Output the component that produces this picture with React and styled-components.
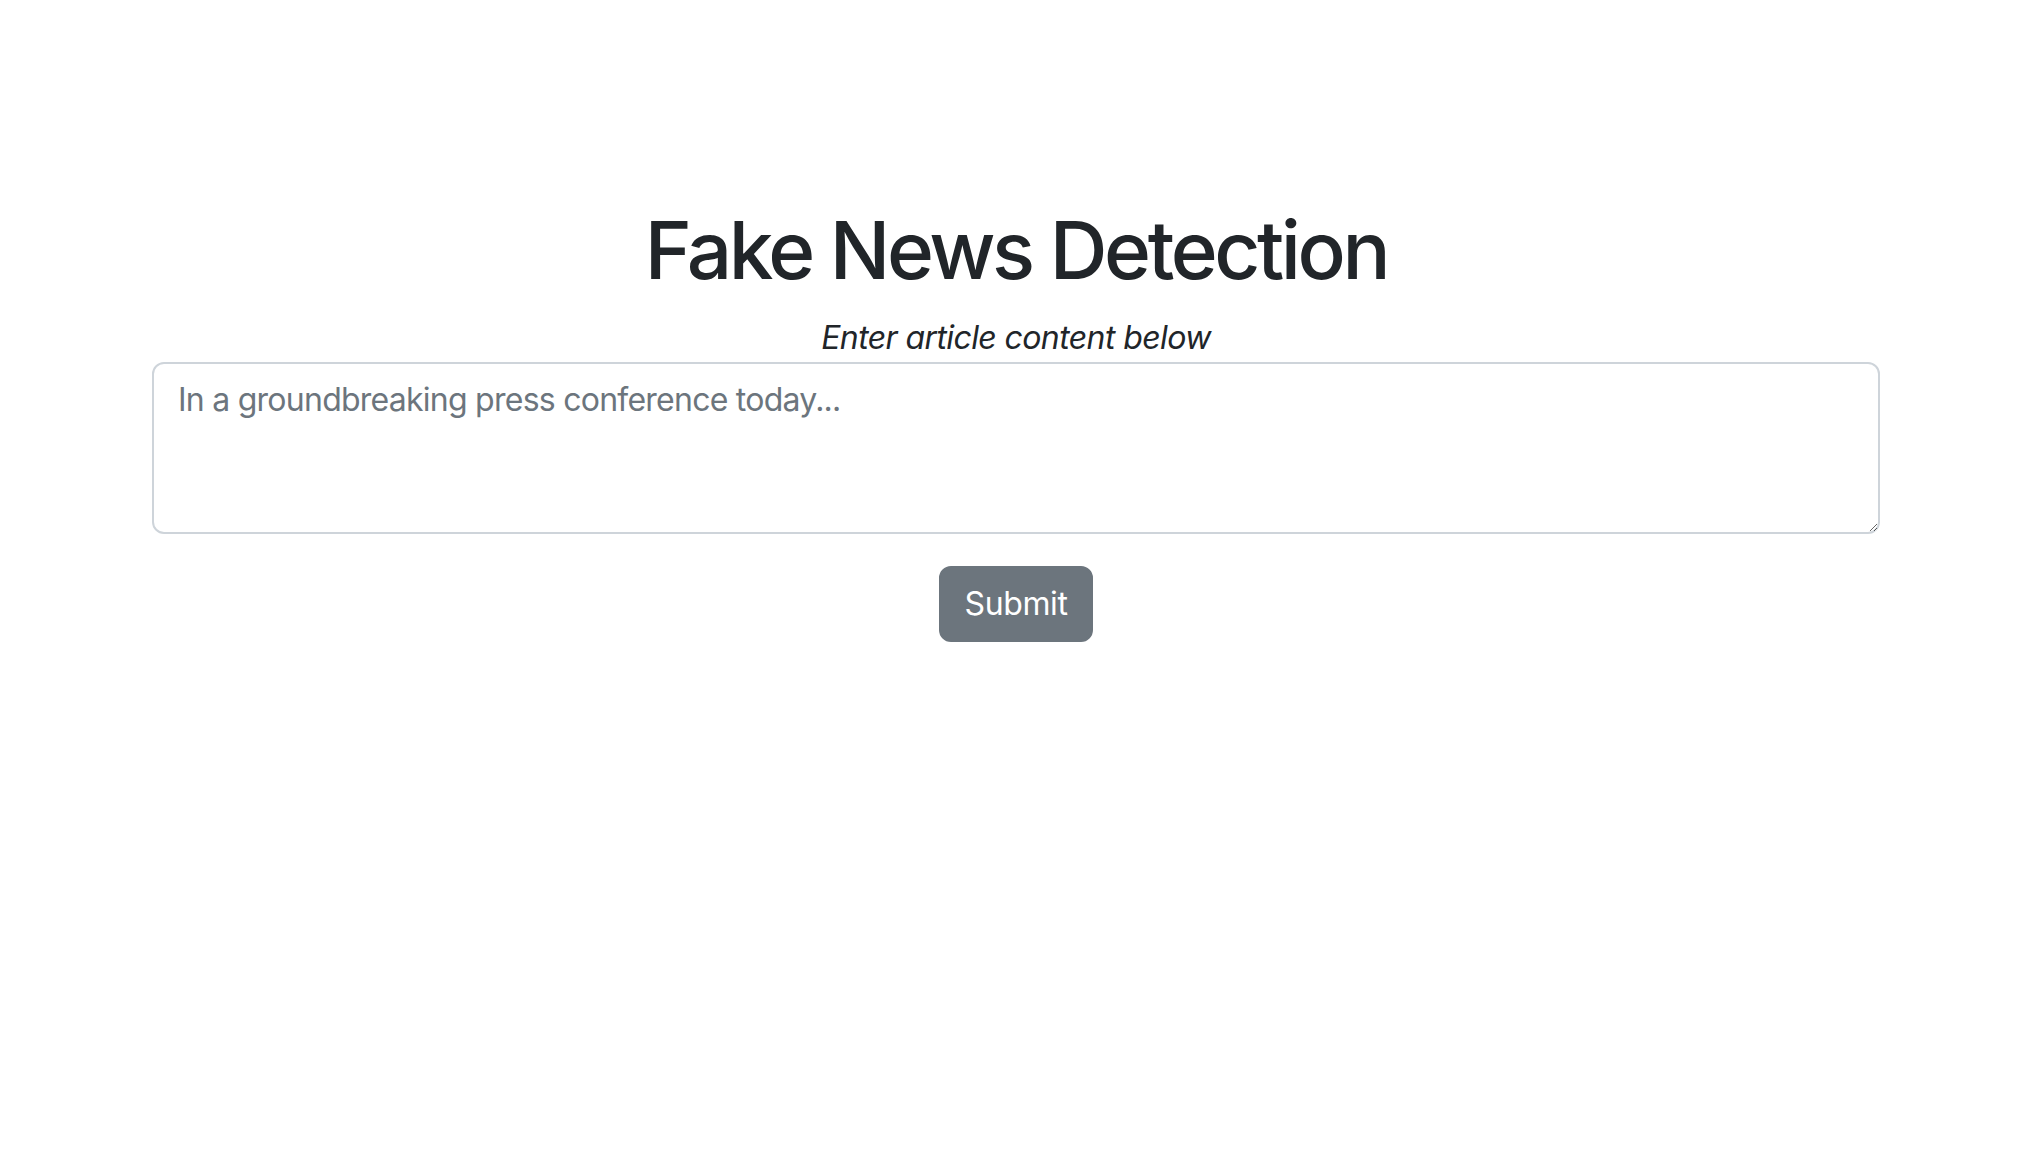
import React from 'react'
import styled, { createGlobalStyle } from 'styled-components'

const GlobalStyle = createGlobalStyle`
  html, body {
    margin: 0;
    padding: 0;
    background: #fff;
  }
  body {
    font-family: Inter, "Noto Sans", "Liberation Sans", sans-serif;
    color: #212529;
  }
  * {
    box-sizing: border-box;
  }
`

const Page = styled.main`
  display: flex;
  flex-direction: column;
  align-items: center;
  padding-top: 202px;
  min-height: 1156px;
`

const Title = styled.h1`
  margin: 0 0 16px;
  font-size: 80px;
  font-weight: 500;
  line-height: 96px;
  letter-spacing: -3.4px;
`

const Subtitle = styled.p`
  margin: 0;
  font-size: 32px;
  font-style: italic;
  line-height: 48px;
  letter-spacing: -0.6px;
`

const Form = styled.form`
  width: 1728px;
  display: flex;
  flex-direction: column;
  align-items: center;
`

const Textarea = styled.textarea`
  display: block;
  width: 100%;
  height: 172px;
  padding: 12px 24px;
  font-family: inherit;
  font-size: 32px;
  line-height: 48px;
  letter-spacing: -0.75px;
  color: #212529;
  background: #fff;
  border: 2px solid #ced4da;
  border-radius: 12px;
  outline: none;

  &::placeholder {
    color: #6c757d;
    opacity: 1;
  }
`

const Button = styled.button`
  margin-top: 32px;
  padding: 12px 24px;
  font-family: inherit;
  font-size: 32px;
  line-height: 48px;
  letter-spacing: -0.4px;
  color: #fff;
  background: #6c757d;
  border: 2px solid #6c757d;
  border-radius: 12px;
  cursor: pointer;
`

const App = () => (
  <>
    <GlobalStyle />
    <Page>
      <Title>Fake News Detection</Title>
      <Subtitle>Enter article content below</Subtitle>
      <Form onSubmit={e => e.preventDefault()}>
        <Textarea
          rows={3}
          placeholder="In a groundbreaking press conference today..."
        />
        <Button type="submit">Submit</Button>
      </Form>
    </Page>
  </>
)

export default App
